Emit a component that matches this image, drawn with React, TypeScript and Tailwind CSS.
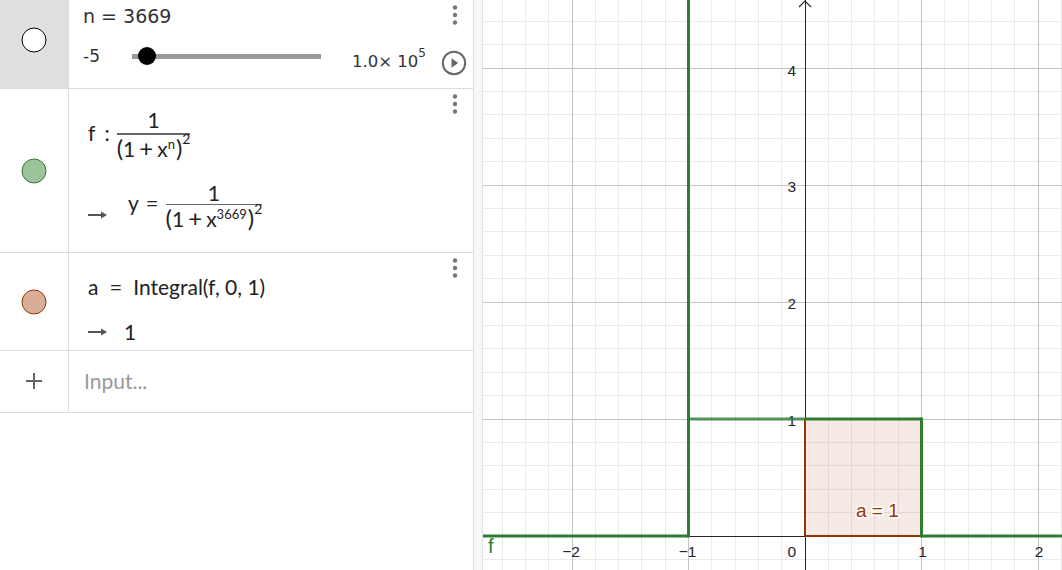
import React from "react";

const OX = 805;
const OY = 536;
const UX = 116.5;
const UY = 117;
const GL = 483;
const GR = 1062;

function Dots() {
  return (
    <svg width="6" height="20" viewBox="0 0 6 20" className="mt-[5px]">
      <circle cx="3" cy="2.5" r="2.2" fill="#777" />
      <circle cx="3" cy="10" r="2.2" fill="#777" />
      <circle cx="3" cy="17.5" r="2.2" fill="#777" />
    </svg>
  );
}

function PlayButton() {
  return (
    <svg width="26" height="26" viewBox="0 0 26 26">
      <circle cx="13" cy="13" r="11.2" fill="none" stroke="#666" strokeWidth="2" />
      <path d="M10.5 8.2 L17.2 13 L10.5 17.8 Z" fill="#666" />
    </svg>
  );
}

function Dot({ fill, stroke }: { fill: string; stroke: string }) {
  return (
    <svg width="26" height="26" viewBox="0 0 26 26">
      <circle cx="13" cy="13" r="12" fill={fill} stroke={stroke} strokeWidth="1" />
    </svg>
  );
}

function Frac({ num, den, gap }: { num: React.ReactNode; den: React.ReactNode; gap: string }) {
  return (
    <span className="inline-flex flex-col items-center">
      <span className={"leading-[20px] " + gap}>{num}</span>
      <span className="h-[1.5px] self-stretch bg-[#666]" />
      <span className="leading-[24px] pt-[1px] whitespace-nowrap">{den}</span>
    </span>
  );
}

function Den({ exp }: { exp: string }) {
  return (
    <>
      <span className="text-[24px]">(</span>
      <span>1</span>
      <span className="mx-[4px] text-[24px]">+</span>
      <span>x</span>
      <sup className="text-[13px] top-[-0.6em]">{exp}</sup>
      <span className="ml-[1px] text-[24px]">)</span>
      <sup className="text-[14px] top-[-0.9em]">2</sup>
    </>
  );
}

function Arrow() {
  return (
    <svg width="20" height="10" viewBox="0 0 20 10" className="block">
      <path d="M0 5 H16" stroke="#555" strokeWidth="2" />
      <path d="M13 1.5 L19 5 L13 8.5 Z" fill="#555" />
    </svg>
  );
}

function Graph() {
  const minorX: number[] = [];
  for (let k = -14; k <= 12; k++) {
    const x = OX + (k * UX) / 5;
    if (x > GL && x < GR && k % 5 !== 0) minorX.push(x);
  }
  const minorY: number[] = [];
  for (let k = -2; k <= 23; k++) {
    const y = OY - (k * UY) / 5;
    if (y > 0 && y < 570 && k % 5 !== 0) minorY.push(y);
  }
  const majorX = [-2, -1, 1, 2].map((i) => OX + i * UX);
  const majorY = [1, 2, 3, 4].map((j) => OY - j * UY);
  const green = "#2e7d32";
  const x1 = OX + UX;
  const xm1 = OX - UX;
  const y1 = OY - UY;

  return (
    <svg width="579" height="570" viewBox="483 0 579 570" className="block">
      <rect x="483" y="0" width="579" height="570" fill="#fff" />
      <g shapeRendering="crispEdges">
        {minorX.map((x) => (
          <line key={"mx" + x} x1={x} y1={0} x2={x} y2={570} stroke="#ebebeb" strokeWidth="1" />
        ))}
        {minorY.map((y) => (
          <line key={"my" + y} x1={GL} y1={y} x2={GR} y2={y} stroke="#ebebeb" strokeWidth="1" />
        ))}
        {majorX.map((x) => (
          <line key={"Mx" + x} x1={x} y1={0} x2={x} y2={570} stroke="#c4c4c4" strokeWidth="1" />
        ))}
        {majorY.map((y) => (
          <line key={"My" + y} x1={GL} y1={y} x2={GR} y2={y} stroke="#c4c4c4" strokeWidth="1" />
        ))}
      </g>

      <rect x={OX} y={y1} width={UX} height={UY} fill="#993300" fillOpacity="0.1" />

      <g shapeRendering="crispEdges">
        <line x1={GL} y1={OY} x2={GR} y2={OY} stroke="#252525" strokeWidth="1" />
        <line x1={OX} y1={0} x2={OX} y2={570} stroke="#252525" strokeWidth="1" />
      </g>
      <path d="M799 7 L805 1 L811 7" fill="none" stroke="#252525" strokeWidth="1.2" />

      <line x1={OX} y1={y1} x2={OX} y2={OY} stroke="#993300" strokeWidth="2" />
      <line x1={OX} y1={OY} x2={x1} y2={OY} stroke="#993300" strokeWidth="2" />

      <g fontFamily="'Liberation Sans', Arial, sans-serif" fontSize="15.5" fill="#252525">
        <text x="796" y="76" textAnchor="end">4</text>
        <text x="796" y="192" textAnchor="end">3</text>
        <text x="796" y="309" textAnchor="end">2</text>
        <text x="796" y="426" textAnchor="end">1</text>
        <text x="796" y="557" textAnchor="end">0</text>
        <text x={OX - 2 * UX - 1} y="557" textAnchor="middle">−2</text>
        <text x={xm1 - 1} y="557" textAnchor="middle">−1</text>
        <text x={x1 + 1} y="557" textAnchor="middle">1</text>
        <text x={OX + 2 * UX + 1} y="557" textAnchor="middle">2</text>
      </g>

      <g fill="none" stroke={green} strokeWidth="3">
        <line x1={GL} y1={OY} x2={xm1} y2={OY} />
        <line x1={xm1} y1={0} x2={xm1} y2={OY + 1.5} />
        <line x1={xm1} y1={y1} x2={OX} y2={y1} strokeOpacity="0.8" />
        <line x1={OX} y1={y1} x2={x1} y2={y1} />
        <line x1={x1} y1={y1 - 1.5} x2={x1} y2={OY + 1.5} />
        <line x1={x1} y1={OY} x2={GR} y2={OY} />
      </g>

      <text
        x="856"
        y="517"
        fontFamily="'Liberation Sans', Arial, sans-serif"
        fontSize="19"
        fill="#993300"
        stroke="#fff"
        strokeWidth="3"
        paintOrder="stroke"
      >
        a = 1
      </text>
      <text x="488" y="553" fontFamily="'Liberation Sans', Arial, sans-serif" fontSize="20" fill={green}>
        f
      </text>
    </svg>
  );
}

export default function App() {
  return (
    <div className="flex h-[570px] w-[1062px] overflow-hidden bg-white">
      {/* algebra view */}
      <div className="flex w-[474px] shrink-0 flex-col border-r border-[#dcdcdc]">
        {/* slider n */}
        <div className="flex h-[89px] border-b border-[#dcdcdc]">
          <div className="flex w-[69px] shrink-0 items-center justify-center border-r border-[#dcdcdc] bg-[#e0e0e0] pb-[8px]">
            <Dot fill="#fff" stroke="#000" />
          </div>
          <div className="flex flex-1 flex-col pl-[14px] font-['DejaVu_Sans',sans-serif] text-[#333]">
            <div className="pt-[5px] text-[19px] leading-[22px]">n = 3669</div>
            <div className="mt-[18px] flex h-[22px] items-center">
              <span className="w-[49px] text-[17px] leading-[22px]">-5</span>
              <div className="relative h-[5px] w-[189px] bg-[#999]">
                <span className="absolute left-[6px] top-[-6.5px] h-[18px] w-[18px] rounded-full bg-black" />
              </div>
              <span className="ml-[31px] mt-[12px] whitespace-nowrap text-[16.5px] leading-[22px]">
                1.0× 10<sup className="text-[12px] top-[-0.8em]">5</sup>
              </span>
            </div>
          </div>
          <div className="flex w-[37px] shrink-0 flex-col items-center">
            <Dots />
            <div className="mt-[25px] -ml-[2px]">
              <PlayButton />
            </div>
          </div>
        </div>

        {/* function f */}
        <div className="flex h-[164px] border-b border-[#dcdcdc]">
          <div className="flex w-[69px] shrink-0 items-center justify-center border-r border-[#dcdcdc]">
            <Dot fill="#9bc49b" stroke="#2e7d32" />
          </div>
          <div className="flex flex-1 flex-col pl-[19px] font-['Lato','Open_Sans',sans-serif] text-[21px] text-[#222]">
            <div className="mt-[21px] flex items-start">
              <span className="mt-[13px] leading-[20px]">f</span>
              <span className="ml-[9px] mr-[7px] mt-[13px] leading-[20px]">:</span>
              <Frac num="1" den={<Den exp="n" />} gap="pb-[3px]" />
            </div>
            <div className="mt-[22px] flex items-start">
              <span className="mt-[27px]">
                <Arrow />
              </span>
              <span className="ml-[20px] mt-[10px] leading-[20px]">y</span>
              <span className="ml-[7px] mr-[7px] mt-[10px] text-[22px] leading-[20px]">=</span>
              <Frac num="1" den={<Den exp="3669" />} gap="pb-[1px]" />
            </div>
          </div>
          <div className="flex w-[37px] shrink-0 flex-col items-center">
            <Dots />
          </div>
        </div>

        {/* integral a */}
        <div className="flex h-[98px] border-b border-[#dcdcdc]">
          <div className="flex w-[69px] shrink-0 items-center justify-center border-r border-[#dcdcdc]">
            <Dot fill="#d9ae99" stroke="#993300" />
          </div>
          <div className="flex flex-1 flex-col pl-[19px] font-['Lato','Open_Sans',sans-serif] text-[21px] text-[#222]">
            <div className="mt-[23px] flex leading-[22px]">
              <span>a</span>
              <span className="ml-[11px] text-[22px]">=</span>
              <span className="ml-[11px]">Integral(f, 0, 1)</span>
            </div>
            <div className="mt-[23px] flex items-center leading-[22px]">
              <Arrow />
              <span className="ml-[16px]">1</span>
            </div>
          </div>
          <div className="flex w-[37px] shrink-0 flex-col items-center">
            <Dots />
          </div>
        </div>

        {/* input */}
        <div className="flex h-[62px] border-b border-[#dcdcdc]">
          <div className="flex w-[69px] shrink-0 items-center justify-center border-r border-[#dcdcdc] pb-[2px]">
            <svg width="20" height="20" viewBox="0 0 20 20">
              <path d="M10 2 V18 M2 10 H18" stroke="#666" strokeWidth="2" />
            </svg>
          </div>
          <div className="flex flex-1 items-center pl-[15px] pb-[2px] font-['Lato','Open_Sans',sans-serif] text-[21px] text-[#999]">
            Input...
          </div>
        </div>
      </div>

      {/* gutter */}
      <div className="w-[9px] shrink-0 border-r border-[#e0e0e0] bg-[#f7f7f7]" />

      {/* graphics view */}
      <div className="flex-1">
        <Graph />
      </div>
    </div>
  );
}
